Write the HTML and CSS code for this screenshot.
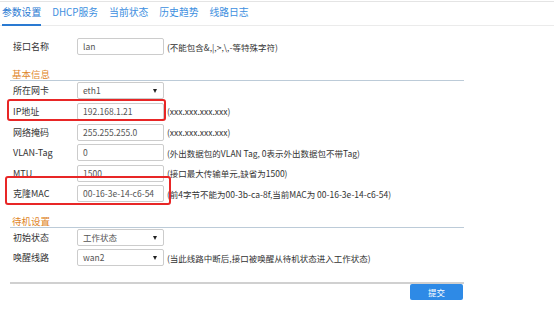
FILE: index.html
```html
<!DOCTYPE html>
<html lang="zh">
<head>
<meta charset="utf-8">
<link rel="stylesheet" href="styles.css">
</head>
<body>
<div class="tabs">
  <div class="tab active">参数设置</div>
  <div class="tab">DHCP服务</div>
  <div class="tab">当前状态</div>
  <div class="tab">历史趋势</div>
  <div class="tab">线路日志</div>
</div>
<div class="form">
  <div class="row">
    <div class="label">接口名称</div>
    <div class="ctl">lan</div>
    <div class="hint">(不能包含&amp;,|,&gt;,\,-等特殊字符)</div>
  </div>
  <div class="section">基本信息</div>
  <div class="row">
    <div class="label">所在网卡</div>
    <div class="ctl sel">eth1<span class="arrow"></span></div>
  </div>
  <div class="row mark">
    <div class="label">IP地址</div>
    <div class="ctl">192.168.1.21</div>
    <div class="hint">(xxx.xxx.xxx.xxx)</div>
    <div class="redbox ip"></div>
  </div>
  <div class="row">
    <div class="label">网络掩码</div>
    <div class="ctl">255.255.255.0</div>
    <div class="hint">(xxx.xxx.xxx.xxx)</div>
  </div>
  <div class="row">
    <div class="label">VLAN-Tag</div>
    <div class="ctl">0</div>
    <div class="hint">(外出数据包的VLAN Tag, 0表示外出数据包不带Tag)</div>
  </div>
  <div class="row">
    <div class="label">MTU</div>
    <div class="ctl">1500</div>
    <div class="hint">(接口最大传输单元,缺省为1500)</div>
  </div>
  <div class="row mark">
    <div class="label">克隆MAC</div>
    <div class="ctl">00-16-3e-14-c6-54</div>
    <div class="hint">(前4字节不能为00-3b-ca-8f,当前MAC为 00-16-3e-14-c6-54)</div>
    <div class="redbox mac"></div>
  </div>
  <div class="section">待机设置</div>
  <div class="row short">
    <div class="label">初始状态</div>
    <div class="ctl sel">工作状态<span class="arrow"></span></div>
  </div>
  <div class="row short">
    <div class="label">唤醒线路</div>
    <div class="ctl sel">wan2<span class="arrow"></span></div>
    <div class="hint">(当此线路中断后,接口被唤醒从待机状态进入工作状态)</div>
  </div>
  <div class="footer">
    <div class="btn">提交</div>
  </div>
</div>
</body>
</html>
```

FILE: styles.css
```css
html, body {
  margin: 0;
  padding: 0;
  background: #ffffff;
}
body {
  padding-top: 1px;
  font-family: "Noto Sans CJK SC", "Noto Sans", sans-serif;
  color: #333333;
}
.tabs {
  border-top: 1px solid #e4e4e4;
  border-bottom: 1px solid #ebebeb;
  height: 23px;
  display: flex;
  padding-left: 2px;
  gap: 11px;
}
.tab {
  font-size: 9.8px;
  line-height: 21px;
  color: #3d8fe0;
  border-bottom: 2px solid transparent;
  margin-bottom: -1px;
  white-space: nowrap;
}
.tab.active {
  color: #2a7ad2;
  border-bottom-color: #2a7ad2;
}
.form {
  margin: 10.5px 0 0 10px;
  width: 454px;
}
.row {
  position: relative;
  display: flex;
  align-items: center;
  height: 20.6px;
}
.row.short {
  height: 20px;
}
.label {
  width: 64px;
  padding-left: 3px;
  font-size: 9px;
  color: #333;
  white-space: nowrap;
}
.ctl {
  position: relative;
  width: 80px;
  height: 15px;
  border: 1px solid #cccccc;
  border-radius: 2px;
  padding-left: 5px;
  font-size: 8.5px;
  line-height: 15px;
  color: #555555;
  flex: none;
  white-space: nowrap;
}
.arrow {
  position: absolute;
  right: 6px;
  top: 6px;
  width: 0;
  height: 0;
  border-left: 2.5px solid transparent;
  border-right: 2.5px solid transparent;
  border-top: 4px solid #222;
}
.hint {
  margin-left: 3px;
  font-size: 8.5px;
  color: #333;
  white-space: nowrap;
}
.section {
  height: 22.5px;
  border-bottom: 1px solid #bccbd8;
  box-sizing: content-box;
  display: flex;
  align-items: flex-end;
  padding-left: 2px;
  font-size: 9.5px;
  line-height: 12px;
  padding-bottom: 0;
  color: #e0862a;
}
.redbox {
  position: absolute;
  border: 2px solid #e82626;
  border-radius: 3px;
  pointer-events: none;
}
.redbox.ip {
  left: -3px;
  top: -2px;
  width: 155px;
  height: 18px;
}
.redbox.mac {
  left: -5px;
  top: -8px;
  width: 162px;
  height: 25px;
}
.footer {
  margin-top: 14px;
  border-top: 2px solid #d0d0d0;
  display: flex;
  justify-content: flex-end;
  padding-right: 1px;
}
.btn {
  width: 53px;
  height: 16px;
  background: #2e8ae6;
  border-radius: 2px;
  color: #ffffff;
  font-size: 8.5px;
  line-height: 16px;
  text-align: center;
}
```
